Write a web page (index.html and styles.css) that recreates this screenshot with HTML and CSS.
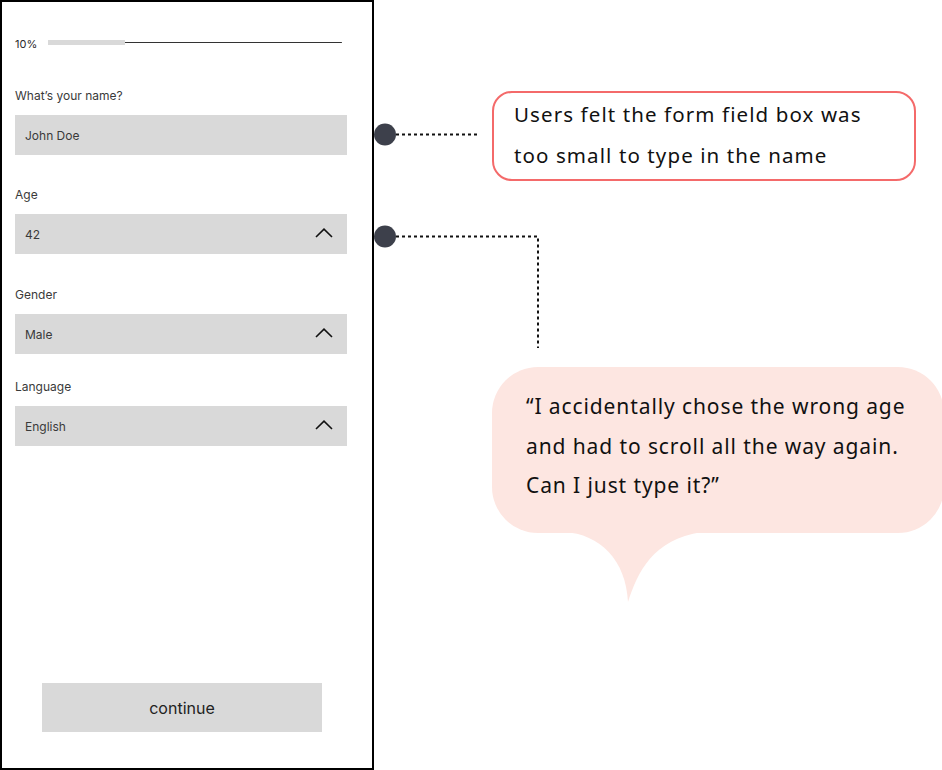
FILE: index.html
```html
<!DOCTYPE html>
<html lang="en">
<head>
<meta charset="utf-8">
<title>Form feedback</title>
<link rel="stylesheet" href="styles.css">
</head>
<body>
<div class="canvas">
  <div class="phone">
    <div class="progress">
      <span class="progress-label">10%</span>
      <div class="progress-track"><div class="progress-fill" style="width:26%"></div></div>
    </div>

    <div class="group group-first">
      <div class="label">What’s your name?</div>
      <div class="field">John Doe</div>
    </div>
    <div class="group">
      <div class="label">Age</div>
      <div class="field">42
        <svg class="chev" viewBox="0 0 18 10" width="18" height="10"><path d="M1 9 L9 1.2 L17 9" fill="none" stroke="#111" stroke-width="1.6"/></svg>
      </div>
    </div>
    <div class="group group-wide">
      <div class="label">Gender</div>
      <div class="field">Male
        <svg class="chev" viewBox="0 0 18 10" width="18" height="10"><path d="M1 9 L9 1.2 L17 9" fill="none" stroke="#111" stroke-width="1.6"/></svg>
      </div>
    </div>
    <div class="group group-tight">
      <div class="label">Language</div>
      <div class="field">English
        <svg class="chev" viewBox="0 0 18 10" width="18" height="10"><path d="M1 9 L9 1.2 L17 9" fill="none" stroke="#111" stroke-width="1.6"/></svg>
      </div>
    </div>

    <div class="spacer"></div>
    <div class="button">continue</div>
  </div>

  <svg class="connectors" width="942" height="770" viewBox="0 0 942 770">
    <path d="M396 134.5 H479" stroke="#111" stroke-width="2" stroke-dasharray="3 3" fill="none"/>
    <path d="M396 236.5 H538 V348" stroke="#111" stroke-width="2" stroke-dasharray="3 3" fill="none"/>
    <circle cx="385" cy="134.5" r="11" fill="#3d404b"/>
    <circle cx="385" cy="236.5" r="11" fill="#3d404b"/>
    <path d="M564 528 L564 532 C600 534 626 560 628 602 C638 572 652 540 702 532 L702 528 Z" fill="#fde6e1"/>
  </svg>

  <div class="note">Users felt the form field box was too small to type in the name</div>
  <div class="bubble">“I accidentally chose the wrong age and had to scroll all the way again. Can I just type it?”</div>
</div>
</body>
</html>
```

FILE: styles.css
```css
html, body {
  margin: 0;
  padding: 0;
  background: #fff;
}
.canvas {
  position: relative;
  width: 942px;
  height: 770px;
  overflow: hidden;
}
.phone {
  box-sizing: border-box;
  width: 374px;
  height: 770px;
  border: 2px solid #000;
  padding: 0 25px 36px 13px;
  display: flex;
  flex-direction: column;
  font-family: Inter, "Liberation Sans", sans-serif;
  color: #3a3a3a;
}
.progress {
  display: flex;
  align-items: center;
  gap: 11px;
  margin-top: 33px;
  margin-right: 5px;
  height: 14px;
}
.progress-label {
  font-size: 11px;
  line-height: 14px;
  margin-top: 3px;
  color: #2a2a2a;
}
.progress-track {
  flex: 1;
  height: 5px;
  background: linear-gradient(#333, #333) center / 100% 1px no-repeat;
}
.progress-fill {
  height: 5px;
  background: #d9d9d9;
}
.group {
  display: flex;
  flex-direction: column;
  margin-top: 32px;
}
.group-first {
  margin-top: 39px;
}
.group-wide {
  margin-top: 33px;
}
.group-tight {
  margin-top: 25px;
}
.label {
  font-size: 12px;
  line-height: 16px;
  margin-bottom: 11px;
}
.field {
  height: 40px;
  background: #d9d9d9;
  display: flex;
  align-items: center;
  justify-content: space-between;
  padding: 0 14px 0 10px;
  font-size: 12px;
}
.chev {
  display: block;
  margin-top: -2px;
}
.spacer {
  flex: 1;
}
.button {
  align-self: flex-start;
  margin-left: 27px;
  width: 280px;
  height: 49px;
  background: #d9d9d9;
  display: flex;
  align-items: center;
  justify-content: center;
  font-size: 16px;
  color: #222;
}
.connectors {
  position: absolute;
  left: 0;
  top: 0;
}
.note {
  position: absolute;
  left: 492px;
  top: 91px;
  box-sizing: border-box;
  width: 424px;
  height: 90px;
  border: 2px solid #f46a6a;
  border-radius: 20px;
  padding: 1px 20px 0 20px;
  font-family: "Noto Sans", "Open Sans", sans-serif;
  font-size: 20.5px;
  letter-spacing: 1.1px;
  line-height: 41px;
  color: #111;
}
.bubble {
  position: absolute;
  left: 492px;
  top: 367px;
  box-sizing: border-box;
  width: 452px;
  height: 166px;
  background: #fde6e1;
  border-radius: 46px;
  padding: 20px 20px 0 34px;
  font-family: "Noto Sans", "Open Sans", sans-serif;
  font-size: 21px;
  letter-spacing: 0.9px;
  line-height: 39.5px;
  color: #111;
}
```
